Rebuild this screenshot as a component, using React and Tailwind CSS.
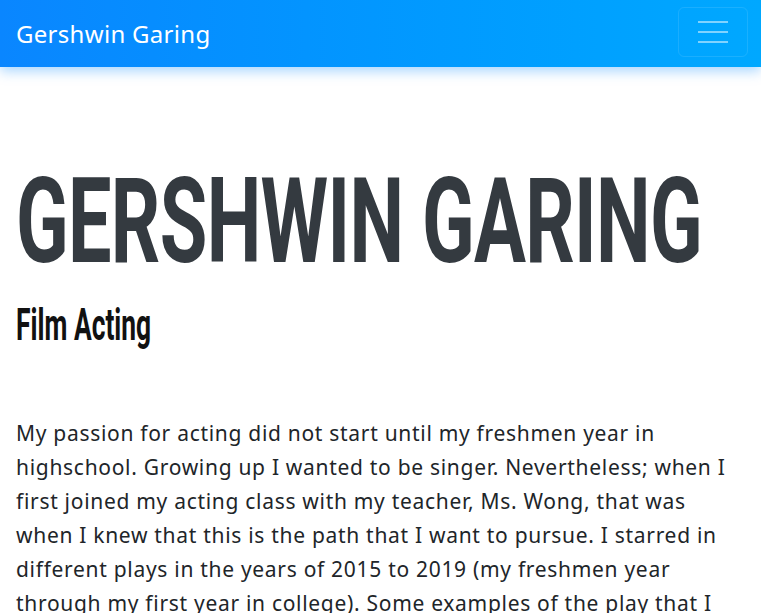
export default function App() {
  return (
    <div className="min-h-screen bg-white">
      <nav className="relative z-10 flex h-[67px] items-center justify-between bg-gradient-to-r from-[#0a86ff] to-[#00a8ff] pl-4 pr-[13px] shadow-[0_4px_12px_rgba(0,136,255,0.35)]">
        <a className="font-['Noto_Sans',sans-serif] text-[24px] leading-none tracking-[0.3px] text-white">Gershwin Garing</a>
        <button className="-mt-[3px] flex h-[50px] w-[70px] flex-col items-center justify-center gap-2 rounded-md border border-white/10">
          <span className="block h-[2px] w-[30px] bg-white/50"></span>
          <span className="block h-[2px] w-[30px] bg-white/50"></span>
          <span className="block h-[2px] w-[30px] bg-white/50"></span>
        </button>
      </nav>
      <main className="px-4">
        <h1 className="mt-[96px] origin-left scale-x-[0.655] whitespace-nowrap font-['Roboto',sans-serif] text-[118px] font-bold leading-none tracking-[-1px] text-[#343a40]">
          GERSHWIN GARING
        </h1>
        <h2 className="mt-[22px] origin-left scale-x-[0.6] whitespace-nowrap font-['Roboto',sans-serif] text-[44px] font-bold leading-none text-[#111]">
          Film Acting
        </h2>
        <p className="mt-[69px] font-['Noto_Sans',sans-serif] text-[21px] leading-[34px] tracking-[0.7px] text-[#212529]">
          My passion for acting did not start until my freshmen year in highschool. Growing up I wanted to be singer. Nevertheless; when I first joined my acting class with my teacher, Ms. Wong, that was when I knew that this is the path that I want to pursue. I starred in different plays in the years of 2015 to 2019 (my freshmen year through my first year in college). Some examples of the play that I was a part of are The Crucible, Our Town, and A Midsummer Night's Dream.
        </p>
      </main>
    </div>
  );
}
